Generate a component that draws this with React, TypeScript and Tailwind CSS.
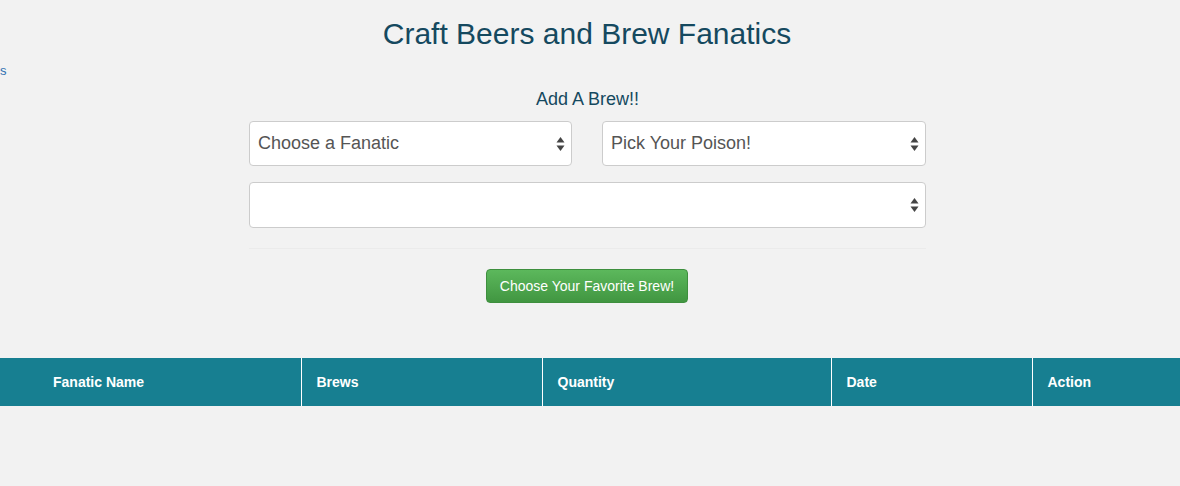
import { ChangeEvent, useState } from "react";

const heading = "text-[#15495f]";

function Arrows() {
  return (
    <svg
      aria-hidden="true"
      width="9"
      height="15"
      viewBox="0 0 9 15"
      className="pointer-events-none absolute right-[7px] top-1/2 -translate-y-1/2"
    >
      <path d="M4.5 0.5 L8.5 6 H0.5 Z" fill="#444" />
      <path d="M4.5 14.5 L8.5 9 H0.5 Z" fill="#444" />
    </svg>
  );
}

function Picker({
  value,
  options,
  onChange,
  className,
}: {
  value: string;
  options: string[];
  onChange: (v: string) => void;
  className?: string;
}) {
  return (
    <div className={`relative ${className ?? ""}`}>
      <select
        value={value}
        onChange={(e: ChangeEvent<HTMLSelectElement>) => onChange(e.target.value)}
        className="h-full w-full appearance-none rounded-[4px] border border-[#cccccc] bg-white pl-[8px] pr-6 text-[18px] text-[#555555] outline-none"
      >
        {options.map((o) => (
          <option key={o} value={o}>
            {o}
          </option>
        ))}
      </select>
      <Arrows />
    </div>
  );
}

const columns = [
  { label: "Fanatic Name", width: "w-[301px]", pad: "pl-[53px]" },
  { label: "Brews", width: "w-[241px]", pad: "pl-[15px]" },
  { label: "Quantity", width: "w-[289px]", pad: "pl-[15px]" },
  { label: "Date", width: "w-[201px]", pad: "pl-[15px]" },
  { label: "Action", width: "", pad: "pl-[15px]" },
];

export default function App() {
  const [fanatic, setFanatic] = useState("Choose a Fanatic");
  const [beer, setBeer] = useState("Pick Your Poison!");
  const [extra, setExtra] = useState("");

  return (
    <div className="min-h-[486px] bg-[#f2f2f2] font-['Liberation_Sans',Arial,sans-serif]">
      <h1 className={`pr-[6px] pt-[16px] text-center text-[30px] leading-[36px] ${heading}`}>
        Craft Beers and Brew Fanatics
      </h1>

      <div className="mt-[9px] h-[20px] text-[13px] leading-[20px]">
        <a href="#" className="text-[#2f6fb0]">
          s
        </a>
      </div>

      <div className="mx-auto w-[682px] pr-[5px]">
        <h2 className={`mt-[6px] text-center text-[18px] leading-[24px] ${heading}`}>
          Add A Brew!!
        </h2>

        <div className="mt-[10px] flex gap-[30px]">
          <Picker
            className="h-[45px] w-[323px]"
            value={fanatic}
            onChange={setFanatic}
            options={["Choose a Fanatic", "Hop Head Harry", "Stout Sally"]}
          />
          <Picker
            className="h-[45px] flex-1"
            value={beer}
            onChange={setBeer}
            options={["Pick Your Poison!", "IPA", "Porter", "Saison"]}
          />
        </div>

        <Picker
          className="mt-[16px] h-[46px] w-full"
          value={extra}
          onChange={setExtra}
          options={["", "1", "2", "6", "12"]}
        />

        <hr className="mt-[20px] border-t border-[#ebebeb]" />

        <div className="mt-[20px] flex pl-[237px]">
          <button
            type="button"
            className="h-[34px] w-[202px] rounded-[4px] border border-[#3e8f3e] bg-gradient-to-b from-[#5cb85c] to-[#419641] text-[14px] text-white"
          >
            Choose Your Favorite Brew!
          </button>
        </div>
      </div>

      <table className="mt-[55px] w-full border-collapse">
        <thead>
          <tr className="h-[48px] bg-[#177f91]">
            {columns.map((c, i) => (
              <th
                key={c.label}
                className={`${c.width} ${c.pad} ${
                  i > 0 ? "border-l border-white" : ""
                } text-left text-[14px] font-bold text-white`}
              >
                {c.label}
              </th>
            ))}
          </tr>
        </thead>
        <tbody />
      </table>
    </div>
  );
}
